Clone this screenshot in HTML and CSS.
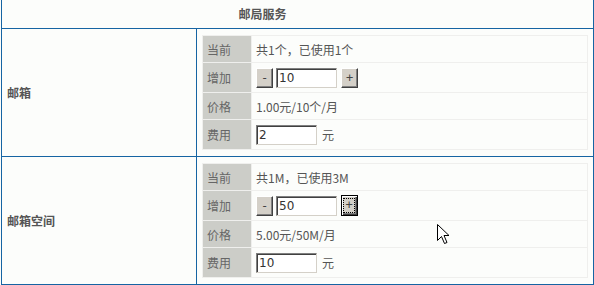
FILE: index.html
```html
<!DOCTYPE html>
<html lang="zh-CN">
<head>
  <meta charset="UTF-8">
  <title>邮局服务</title>
  <link rel="stylesheet" href="styles.css">
</head>
<body>
  <div class="page">
    <div class="frame">
      <div class="title">邮局服务</div>

      <div class="section">
        <div class="name">邮箱</div>
        <div class="body">
          <table class="grid">
            <tr>
              <td class="label">当前</td>
              <td class="value">共1个，已使用1个</td>
            </tr>
            <tr class="tall">
              <td class="label">增加</td>
              <td class="value">
                <div class="stepper">
                  <button class="btn" type="button">-</button>
                  <input class="field" type="text" value="10">
                  <button class="btn" type="button">+</button>
                </div>
              </td>
            </tr>
            <tr>
              <td class="label">价格</td>
              <td class="value">1.00元/10个/月</td>
            </tr>
            <tr class="tall">
              <td class="label">费用</td>
              <td class="value">
                <div class="stepper">
                  <input class="field" type="text" value="2">
                  <span class="unit">元</span>
                </div>
              </td>
            </tr>
          </table>
        </div>
      </div>

      <div class="section last">
        <div class="name">邮箱空间</div>
        <div class="body">
          <table class="grid">
            <tr>
              <td class="label">当前</td>
              <td class="value">共1M，已使用3M</td>
            </tr>
            <tr class="tall">
              <td class="label">增加</td>
              <td class="value">
                <div class="stepper">
                  <button class="btn" type="button">-</button>
                  <input class="field" type="text" value="50">
                  <button class="btn focus" type="button"><span>+</span></button>
                </div>
              </td>
            </tr>
            <tr>
              <td class="label">价格</td>
              <td class="value">5.00元/50M/月</td>
            </tr>
            <tr class="tall">
              <td class="label">费用</td>
              <td class="value">
                <div class="stepper">
                  <input class="field" type="text" value="10">
                  <span class="unit">元</span>
                </div>
              </td>
            </tr>
          </table>
        </div>
      </div>
    </div>

    <svg class="cursor" width="13" height="22" viewBox="0 0 13 22">
      <path d="M0.5 0.5 L0.5 16.5 L4.5 12.5 L7.5 19.5 L10 18.5 L7 11.5 L12 11.5 Z" fill="#fff" stroke="#000" stroke-width="1"/>
    </svg>
  </div>
</body>
</html>
```

FILE: styles.css
```css
body {
  margin: 0;
  padding: 0;
  background-color: #fcfdfb;
  font-family: "Noto Sans CJK SC", "Noto Sans", sans-serif;
  font-size: 12px;
  color: #555;
}

.page {
  position: relative;
  width: 594px;
  height: 285px;
}

.frame {
  box-sizing: border-box;
  width: 593px;
  margin-left: 1px;
  border-left: 1px solid #1664a3;
  border-right: 1px solid #1664a3;
  border-bottom: 1px solid #1664a3;
}

.title {
  height: 28px;
  line-height: 28px;
  border-bottom: 1px solid #1664a3;
  text-align: center;
  padding-right: 70px;
  font-weight: bold;
  color: #555;
}

.section {
  display: grid;
  grid-template-columns: 195px 1fr;
  border-bottom: 1px solid #1664a3;
}

.section.last {
  border-bottom: none;
}

.name {
  box-sizing: border-box;
  display: flex;
  align-items: center;
  padding-left: 5px;
  border-right: 1px solid #1664a3;
  font-weight: bold;
  color: #555;
}

.body {
  padding: 6px 5px;
}

/* inner form table */
.grid {
  width: 100%;
  border-collapse: separate;
  border-spacing: 1px;
  background-color: #efefed;
}

.grid td {
  height: 26px;
  padding: 0 4px;
  vertical-align: middle;
}

.grid tr.tall td {
  height: 29px;
}

.label {
  width: 40px;
  background-color: #cccdc8;
  color: #666;
}

.value {
  background-color: #fcfdfb;
  color: #555;
}

.stepper {
  display: flex;
  align-items: center;
  gap: 3px;
}

.btn {
  box-sizing: border-box;
  width: 17px;
  height: 20px;
  padding: 0;
  margin: 0;
  font-family: "DejaVu Sans Mono", monospace;
  font-size: 12px;
  line-height: 16px;
  color: #444;
  background-color: #d4d0c8;
  border: 1px solid;
  border-color: #fff #404040 #404040 #fff;
  box-shadow: inset -1px -1px 0 #808080;
}

.stepper .btn + .field + .btn {
  margin-left: 1px;
}

.btn.focus {
  height: 21px;
  border-color: #000;
  box-shadow: inset 1px 1px 0 #fff, inset -1px -1px 0 #404040, inset -2px -2px 0 #808080;
}

.btn.focus span {
  display: block;
  margin: 2px 3px 3px 2px;
  height: 13px;
  line-height: 13px;
  outline: 1px dotted #000;
}

.field {
  box-sizing: border-box;
  width: 61px;
  height: 20px;
  margin: 0;
  padding: 0 2px;
  font-family: "DejaVu Sans", sans-serif;
  font-size: 12px;
  color: #333;
  background-color: #fff;
  border: 1px solid;
  border-color: #808080 #d4d0c8 #d4d0c8 #808080;
  box-shadow: inset 1px 1px 0 #404040;
  outline: none;
}

.unit {
  margin-left: 2px;
  color: #555;
}

.cursor {
  position: absolute;
  left: 437px;
  top: 224px;
}
```
